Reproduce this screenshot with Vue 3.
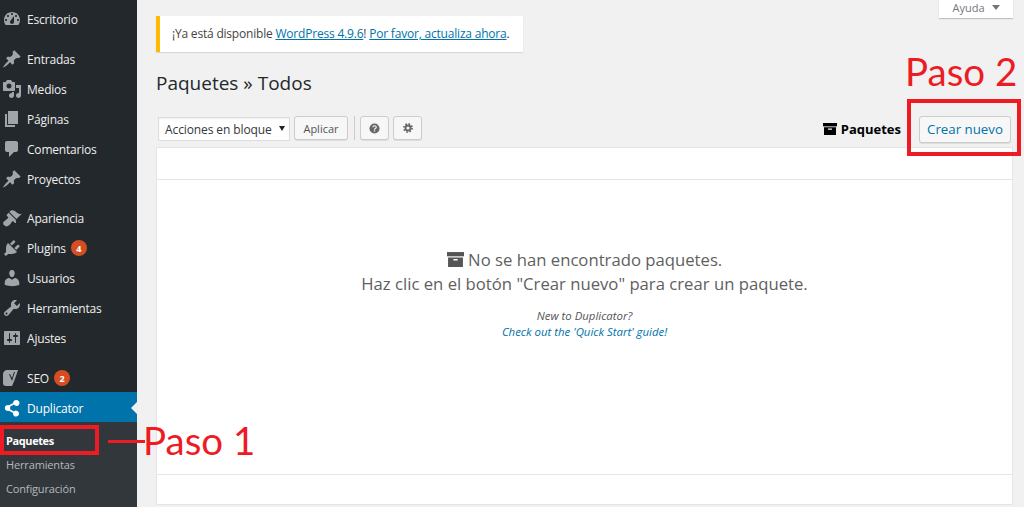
<template>
  <div class="page">
    <aside class="sidebar">
      <div
        v-for="item in menu"
        :key="item.label"
        class="menu-item"
        :class="[item.rowClass, { current: item.current }]"
      >
        <svg class="menu-icon" viewBox="0 0 20 20"><path :d="item.icon" /></svg>
        <span class="menu-label">{{ item.label }}</span>
        <span v-if="item.badge" class="badge">{{ item.badge }}</span>
      </div>
      <div class="submenu">
        <div class="sub-item active">Paquetes</div>
        <div class="sub-item">Herramientas</div>
        <div class="sub-item">Configuración</div>
      </div>
    </aside>

    <main class="content">
      <div class="help-tab">Ayuda <span class="help-arrow"></span></div>

      <div class="notice">
        ¡Ya está disponible <a>WordPress 4.9.6</a>! <a>Por favor, actualiza ahora</a>.
      </div>

      <h1>Paquetes » Todos</h1>

      <div class="toolbar">
        <div class="select">Acciones en bloque<span class="select-arrow"></span></div>
        <button class="btn apply">Aplicar</button>
        <span class="divider"></span>
        <button class="btn icon-btn">
          <svg viewBox="0 0 12 12" width="11" height="11">
            <circle cx="6" cy="6" r="5.5" fill="#666" />
            <path d="M4.2 4.7c0-2.3 3.7-2.3 3.7 0 0 1.5-1.9 1.3-1.9 2.6" fill="none" stroke="#f7f7f7" stroke-width="1.3" />
            <rect x="5.3" y="8" width="1.4" height="1.4" fill="#f7f7f7" />
          </svg>
        </button>
        <button class="btn icon-btn">
          <svg viewBox="0 0 12 12" width="10" height="10">
            <circle cx="6" cy="6" r="3" fill="none" stroke="#666" stroke-width="2.2" />
            <circle cx="6" cy="6" r="4.9" fill="none" stroke="#666" stroke-width="2" stroke-dasharray="1.9 1.95" />
          </svg>
        </button>
        <div class="toolbar-right">
          <span class="packages-label">
            <svg viewBox="0 0 14 12" width="14" height="12">
              <rect x="0" y="0" width="14" height="3.4" fill="#000" />
              <path d="M1 4.2h12V12H1zM5 5.6v1.2h4V5.6z" fill="#000" fill-rule="evenodd" />
            </svg>
            Paquetes
          </span>
          <button class="btn create">Crear nuevo</button>
        </div>
      </div>

      <section class="panel">
        <div class="panel-head"></div>
        <div class="panel-body">
          <p class="empty-title">
            <svg viewBox="0 0 16 14" width="17" height="15">
              <rect x="0" y="0" width="16" height="4" fill="#555" />
              <path d="M1 5h14v9H1zM6 6.5v1.4h4V6.5z" fill="#555" fill-rule="evenodd" />
            </svg>
            No se han encontrado paquetes.
          </p>
          <p class="empty-title">Haz clic en el botón "Crear nuevo" para crear un paquete.</p>
          <p class="hint">New to Duplicator?</p>
          <a class="hint-link">Check out the 'Quick Start' guide!</a>
        </div>
        <div class="panel-foot"></div>
      </section>
    </main>

    <!-- red notes painted over the screenshot -->
    <div class="mark mark-one"></div>
    <div class="mark-line"></div>
    <div class="mark-text text-one">Paso 1</div>
    <div class="mark mark-two"></div>
    <div class="mark-text text-two">Paso 2</div>
  </div>
</template>

<script setup>
const pin = 'M10.44 3.02l1.82-1.82 6.36 6.35-1.83 1.82c-1.05-.68-2.48-.57-3.41.36l-.75.75c-.92.93-1.04 2.35-.35 3.41l-1.83 1.82-2.41-2.41-2.8 2.79c-.42.42-3.38 2.71-3.8 2.29s1.86-3.39 2.28-3.81l2.79-2.79L4.1 9.36l1.83-1.82c1.05.69 2.48.57 3.4-.36l.75-.75c.93-.92 1.05-2.35.36-3.41z'

const menu = [
  { label: 'Escritorio', icon: 'M3.76 16h12.48c1.1-1.37 1.76-3.11 1.76-5 0-4.42-3.58-8-8-8s-8 3.58-8 8c0 1.89.66 3.63 1.76 5zM10 4c.55 0 1 .45 1 1s-.45 1-1 1-1-.45-1-1 .45-1 1-1zM6 6c.55 0 1 .45 1 1s-.45 1-1 1-1-.45-1-1 .45-1 1-1zm8 0c.55 0 1 .45 1 1s-.45 1-1 1-1-.45-1-1 .45-1 1-1zm-5.37 5.55L12 7v6c0 1.1-.9 2-2 2s-2-.9-2-2c0-.57.24-1.08.63-1.45zM4 10c.55 0 1 .45 1 1s-.45 1-1 1-1-.45-1-1 .45-1 1-1zm12 0c.55 0 1 .45 1 1s-.45 1-1 1-1-.45-1-1 .45-1 1-1z' },
  { label: 'Entradas', rowClass: 'gap-wide', icon: pin },
  { label: 'Medios', icon: 'M13 11V4c0-.55-.45-1-1-1h-1.67L9 1H5L3.67 3H2c-.55 0-1 .45-1 1v7c0 .55.45 1 1 1h10c.55 0 1-.45 1-1zM7 4.5c1.38 0 2.5 1.12 2.5 2.5S8.38 9.5 7 9.5 4.5 8.38 4.5 7 5.62 4.5 7 4.5zM14 6h5v10.5c0 1.38-1.12 2.5-2.5 2.5S14 17.88 14 16.5s1.12-2.5 2.5-2.5c.17 0 .34.02.5.05V9h-3V6zm-4 8.05V13h2v3.5c0 1.38-1.12 2.5-2.5 2.5S7 17.88 7 16.5 8.12 14 9.5 14c.17 0 .34.02.5.05z' },
  { label: 'Páginas', icon: 'M6 15V2h10v13H6zm-1 1h8v2H3V5h2v11z' },
  { label: 'Comentarios', icon: 'M5 2h9c1.1 0 2 .9 2 2v7c0 1.1-.9 2-2 2h-2l-5 5v-5H5c-1.1 0-2-.9-2-2V4c0-1.1.9-2 2-2z' },
  { label: 'Proyectos', icon: pin },
  { label: 'Apariencia', rowClass: 'gap-narrow', icon: 'M14.48 11.06L7.41 3.99l1.5-1.5c.5-.56 2.3-.47 3.51.32 1.21.8 1.43 1.28 2.91 2.1 1.18.64 2.45 1.26 4.45.85zm-.71.71L6.7 4.7 4.93 6.47c-.39.39-.39 1.02 0 1.41l1.06 1.06c.39.39.39 1.03 0 1.42-.6.6-1.43 1.11-2.21 1.69-.35.26-.7.53-1.01.84C1.43 13.23.28 15.44 2.21 17.37s4.14.78 5.48-.56c.31-.31.58-.66.84-1.01.58-.78 1.09-1.61 1.69-2.21.39-.39 1.02-.39 1.41 0l1.06 1.06c.39.39 1.02.39 1.41 0z' },
  { label: 'Plugins', badge: 4, icon: 'M13.11 4.36L9.87 7.6 8 5.73l3.24-3.24c.35-.34 1.05-.2 1.56.32.52.51.66 1.21.31 1.55zm-8 1.77l.91-1.12 9.01 9.01-1.19.84c-.71.71-2.63 1.16-3.82 1.16H6.14L4.9 17.26c-.59.59-1.54.59-2.12 0-.59-.58-.59-1.53 0-2.12l1.24-1.24v-3.88c0-1.13.4-3.19 1.09-3.89zm7.26 3.97l3.24-3.24c.34-.35 1.04-.21 1.55.31.52.51.66 1.21.31 1.55l-3.24 3.25z' },
  { label: 'Usuarios', icon: 'M10 9.25c-2.27 0-2.73-3.44-2.73-3.44C7 4.02 7.82 2 9.97 2c2.16 0 2.98 2.02 2.71 3.81 0 0-.41 3.44-2.68 3.44zm0 2.57L12.72 10c2.39 0 4.52 2.33 4.52 4.53v2.49s-3.65 1.13-7.24 1.13c-3.65 0-7.24-1.13-7.24-1.13v-2.49c0-2.25 1.94-4.48 4.47-4.48z' },
  { label: 'Herramientas', icon: 'M16.68 9.77c-1.34 1.34-3.3 1.67-4.95.99l-5.41 6.52c-.99.99-2.59.99-3.58 0s-.99-2.59 0-3.57l6.52-5.42c-.68-1.65-.35-3.61.99-4.95 1.28-1.28 3.12-1.62 4.72-1.06l-2.89 2.89 2.82 2.82 2.86-2.87c.53 1.58.18 3.39-1.08 4.65zM3.81 16.21c.4.39 1.04.39 1.43 0 .4-.4.4-1.04 0-1.43-.39-.4-1.03-.4-1.43 0-.39.39-.39 1.03 0 1.43z' },
  { label: 'Ajustes', icon: 'M18 16V4c0-.55-.45-1-1-1H3c-.55 0-1 .45-1 1v12c0 .55.45 1 1 1h14c.55 0 1-.45 1-1zM8 11h1c.55 0 1 .45 1 1s-.45 1-1 1H8v1.5c0 .28-.22.5-.5.5s-.5-.22-.5-.5V13H6c-.55 0-1-.45-1-1s.45-1 1-1h1V5.5c0-.28.22-.5.5-.5s.5.22.5.5V11zm5-2h-1c-.55 0-1-.45-1-1s.45-1 1-1h1V5.5c0-.28.22-.5.5-.5s.5.22.5.5V7h1c.55 0 1 .45 1 1s-.45 1-1 1h-1v5.5c0 .28-.22.5-.5.5s-.5-.22-.5-.5V9z' },
  { label: 'SEO', rowClass: 'gap-seo', badge: 2, icon: 'M5 2h11l-1 3c-1 3-3 9-5 13H4c-2 0-3-1-3-3V6c0-2 2-4 4-4zm2 4l3 7 3-9h-1l-2 6-2-4z' },
  { label: 'Duplicator', current: true, icon: 'M14.5 2a3 3 0 1 1-2.6 4.5L8 8.8a3 3 0 0 1 0 2.4l3.9 2.3a3 3 0 1 1-.8 1.5l-4-2.3a3 3 0 1 1 0-5.4l4-2.3A3 3 0 0 1 14.5 2z' }
]
</script>

<style>
html,
body {
  margin: 0;
  background: #f1f1f1;
  overflow: hidden;
}
</style>

<style scoped>
* {
  box-sizing: border-box;
}

.page {
  position: relative;
  display: flex;
  width: 1024px;
  height: 507px;
  overflow: hidden;
  background: #f1f1f1;
  font-family: "Open Sans", "Noto Sans", sans-serif;
  font-size: 12px;
  color: #444;
}

.sidebar {
  flex: 0 0 137px;
  padding-top: 4px;
  background: #23282d;
  color: #eee;
  display: flex;
  flex-direction: column;
}

.menu-item {
  display: flex;
  align-items: center;
  height: 30px;
  padding-left: 2px;
  flex-shrink: 0;
  letter-spacing: -0.2px;
}

.menu-item.gap-wide {
  margin-top: 10px;
}

.menu-item.gap-narrow {
  margin-top: 9px;
}

.menu-item.gap-seo {
  margin-top: 10px;
  margin-bottom: -1px;
}

.menu-item.current {
  position: relative;
  padding-top: 2px;
  background: #0073aa;
  color: #fff;
}

.menu-item.current::after {
  content: "";
  position: absolute;
  right: 0;
  top: 10px;
  border: 6px solid transparent;
  border-right-color: #f1f1f1;
  border-left-width: 0;
}

.menu-icon {
  width: 20px;
  height: 20px;
  fill: #a0a5aa;
  flex-shrink: 0;
}

.current .menu-icon {
  fill: #fff;
}

.menu-label {
  margin-left: 5px;
}

.badge {
  display: inline-flex;
  align-items: center;
  justify-content: center;
  width: 16px;
  height: 16px;
  margin-left: 5px;
  border-radius: 50%;
  background: #d54e21;
  color: #fff;
  font-size: 9px;
  font-weight: 700;
}

.submenu {
  flex: 1;
  padding-top: 7px;
  background: #32373c;
}

.sub-item {
  height: 24px;
  line-height: 24px;
  padding-left: 6px;
  font-size: 11px;
  letter-spacing: -0.15px;
  color: #b4b9be;
}

.sub-item.active {
  color: #fff;
  font-weight: 700;
  letter-spacing: -0.4px;
}

.content {
  position: relative;
  flex: 1;
  padding: 16px 11px 0 19px;
}

.help-tab {
  position: absolute;
  top: 0;
  right: 11px;
  width: 74px;
  height: 18px;
  padding-left: 1px;
  line-height: 15px;
  text-align: center;
  font-size: 11px;
  color: #72777c;
  background: #fff;
  box-shadow: 0 1px 1px rgba(0, 0, 0, 0.2);
}

.help-arrow {
  display: inline-block;
  margin-left: 5px;
  border: 4px solid transparent;
  border-top: 5px solid #72777c;
  border-bottom-width: 0;
  vertical-align: 2px;
}

.notice {
  width: 367px;
  height: 36px;
  line-height: 36px;
  padding-left: 12px;
  background: #fff;
  border-left: 4px solid #ffb900;
  box-shadow: 0 1px 1px rgba(0, 0, 0, 0.1);
  font-size: 12px;
  letter-spacing: -0.2px;
  white-space: nowrap;
}

.notice a {
  color: #0073aa;
  text-decoration: underline;
}

h1 {
  margin: 18px 0 0;
  height: 27px;
  line-height: 27px;
  font-size: 19px;
  font-weight: 400;
  color: #23282d;
}

.toolbar {
  display: flex;
  align-items: center;
  margin-top: 18px;
  padding-left: 2px;
  height: 28px;
}

.select {
  position: relative;
  width: 132px;
  height: 24px;
  line-height: 24px;
  padding-left: 6px;
  background: #fff;
  border: 1px solid #ddd;
  font-size: 12px;
  letter-spacing: -0.1px;
  color: #32373c;
  box-shadow: inset 0 1px 2px rgba(0, 0, 0, 0.07);
  white-space: nowrap;
}

.select-arrow {
  position: absolute;
  right: 4px;
  top: 8px;
  border: 3.5px solid transparent;
  border-top: 5px solid #222;
  border-bottom-width: 0;
}

.btn {
  height: 24px;
  padding: 0;
  background: #f7f7f7;
  border: 1px solid #ccc;
  border-radius: 3px;
  box-shadow: 0 1px 0 #ddd;
  font-family: inherit;
  font-size: 11px;
  color: #555;
}

.apply,
.icon-btn,
.divider {
  margin-bottom: 2px;
}

.apply {
  width: 54px;
  margin-left: 4px;
}

.divider {
  width: 1px;
  height: 24px;
  margin-right: 5px;
  margin-left: 6px;
  background: #ccc;
}

.icon-btn {
  width: 29px;
  margin-right: 4px;
  display: flex;
  align-items: center;
  justify-content: center;
}

.toolbar-right {
  margin-left: auto;
  display: flex;
  align-items: center;
  padding-right: 2px;
}

.packages-label {
  font-weight: 700;
  font-size: 13px;
  color: #000;
  display: flex;
  align-items: center;
  gap: 4px;
}

.create {
  width: 92px;
  height: 27px;
  margin-left: 18px;
  color: #0073aa;
  font-size: 13.3px;
}

.panel {
  margin-top: 4px;
  height: 358px;
  background: #fff;
  border: 1px solid #e5e5e5;
  display: flex;
  flex-direction: column;
}

.panel-head {
  height: 32px;
  flex-shrink: 0;
  border-bottom: 1px solid #e5e5e5;
}

.panel-body {
  flex: 1;
  padding-top: 68px;
  text-align: center;
}

.panel-foot {
  height: 30px;
  flex-shrink: 0;
  border-top: 1px solid #e5e5e5;
}

.empty-title {
  margin: 0;
  height: 24px;
  line-height: 24px;
  font-size: 16.7px;
  color: #5f5f5f;
}

.empty-title svg {
  vertical-align: -1px;
}

.hint {
  margin: 12px 0 0;
  line-height: 15px;
  font-size: 11.4px;
  font-style: italic;
  color: #555;
}

.hint-link {
  display: block;
  margin-top: 1px;
  line-height: 15px;
  font-size: 11.4px;
  font-style: italic;
  color: #0073aa;
}

.mark {
  position: absolute;
  border: 4px solid #ed1c24;
}

.mark-one {
  left: 0;
  top: 425px;
  width: 99px;
  height: 30px;
}

.mark-two {
  left: 907px;
  top: 99px;
  width: 114px;
  height: 57px;
}

.mark-line {
  position: absolute;
  left: 108px;
  top: 440px;
  width: 37px;
  height: 3px;
  background: #ed1c24;
}

.mark-text {
  position: absolute;
  font-family: Lato, sans-serif;
  font-size: 38.5px;
  line-height: 44px;
  color: #ed1c24;
  white-space: nowrap;
}

.text-one {
  left: 143px;
  top: 418px;
}

.text-two {
  left: 905px;
  top: 49px;
}
</style>
